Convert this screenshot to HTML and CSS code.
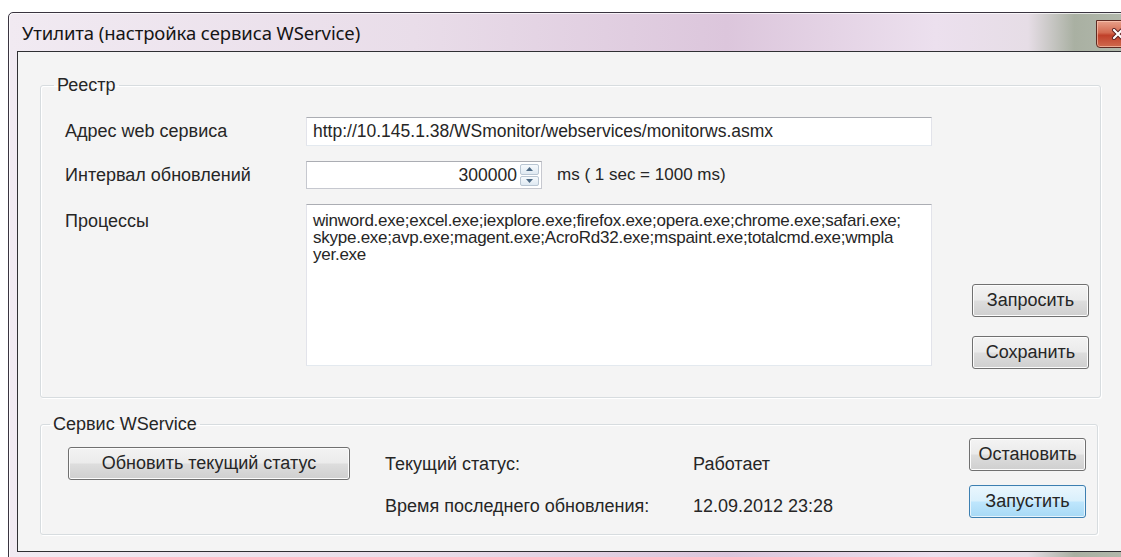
FILE: index.html
```html
<!DOCTYPE html>
<html lang="ru">
<head>
<meta charset="utf-8">
<title>Утилита (настройка сервиса WService)</title>
<link rel="stylesheet" href="styles.css">
</head>
<body>
<div class="window">
  <div class="titlebar">
    <span class="title">Утилита (настройка сервиса WService)</span>
    <span class="close" aria-label="Закрыть">
      <svg width="14" height="12" viewBox="0 0 14 12">
        <path d="M3 2 L11 10 M11 2 L3 10" stroke="#5a2020" stroke-width="4" stroke-linecap="round"/>
        <path d="M3 2 L11 10 M11 2 L3 10" stroke="#ffffff" stroke-width="2.2" stroke-linecap="round"/>
      </svg>
    </span>
  </div>

  <div class="client">
    <fieldset class="group registry">
      <legend>Реестр</legend>
      <div class="reg-grid">
        <label class="lbl">Адрес web сервиса</label>
        <div class="textbox url">http://10.145.1.38/WSmonitor/webservices/monitorws.asmx</div>

        <label class="lbl">Интервал обновлений</label>
        <div class="interval">
          <div class="numeric">
            <span class="num">300000</span>
            <span class="spin">
              <span class="spin-btn"><svg width="7" height="4" viewBox="0 0 7 4"><path d="M0 4 L3.5 0 L7 4 Z" fill="#4d6a85"/></svg></span>
              <span class="spin-btn"><svg width="7" height="4" viewBox="0 0 7 4"><path d="M0 0 L3.5 4 L7 0 Z" fill="#4d6a85"/></svg></span>
            </span>
          </div>
          <span class="hint">ms ( 1 sec = 1000 ms)</span>
        </div>

        <label class="lbl lbl-top">Процессы</label>
        <div class="textbox memo">winword.exe;excel.exe;iexplore.exe;firefox.exe;opera.exe;chrome.exe;safari.exe;<br>skype.exe;avp.exe;magent.exe;AcroRd32.exe;mspaint.exe;totalcmd.exe;wmpla<br>yer.exe</div>

        <div class="actions">
          <button class="btn side">Запросить</button>
          <button class="btn side">Сохранить</button>
        </div>
      </div>
    </fieldset>

    <fieldset class="group service">
      <legend>Сервис WService</legend>
      <div class="svc-row">
        <button class="btn refresh">Обновить текущий статус</button>
        <div class="status">
          <span>Текущий статус:</span>
          <span>Работает</span>
          <span>Время последнего обновления:</span>
          <span>12.09.2012 23:28</span>
        </div>
        <div class="svc-actions">
          <button class="btn side">Остановить</button>
          <button class="btn side default">Запустить</button>
        </div>
      </div>
    </fieldset>
  </div>
</div>
</body>
</html>
```

FILE: styles.css
```css
html, body {
  margin: 0;
  padding: 0;
  background: #ffffff;
  overflow: hidden;
  height: 557px;
}

body {
  font-family: "Liberation Sans", Arial, sans-serif;
  font-size: 18px;
  color: #262626;
}

/* window frame */
.window {
  margin: 12px 0 0 8px;
  width: 1150px;
  border: 1px solid #3a3440;
  border-radius: 5px 5px 0 0;
  background: linear-gradient(90deg, #f1eaf2 0%, #e9dde9 35%, #dcc6dc 62%, #ece0ee 80%, #e6dde6 88%, #a9b0a2 92%, #b9bfb4 100%);
  padding: 0 0 8px 8px;
  box-shadow: inset 1px 1px 0 rgba(255, 255, 255, 0.7);
}

.titlebar {
  height: 38px;
  display: flex;
  align-items: flex-start;
}

.title {
  font-family: "Noto Sans", "Open Sans", sans-serif;
  font-size: 18.5px;
  color: #151515;
  margin: 7px 0 0 5px;
  letter-spacing: -0.1px;
}

.close {
  margin: 7px 27px 0 auto;
  width: 42px;
  height: 26px;
  border: 1px solid #5e2a22;
  border-radius: 0 0 4px 4px;
  background: linear-gradient(#e8a18b 0%, #d36a50 45%, #c0402a 55%, #cf6a4e 100%);
  display: flex;
  align-items: center;
  justify-content: center;
  box-shadow: inset 0 0 0 1px rgba(255, 210, 190, 0.6);
}

/* client area */
.client {
  background: #f4f4f4;
  border: 1px solid #2f2f33;
  border-right: none;
  padding: 24px 0 16px 22px;
}

.group {
  margin: 0;
  width: 1058px;
  box-sizing: border-box;
  border: 1px solid #d7dcdf;
  border-radius: 3px;
  padding: 0;
  box-shadow: inset 1px 1px 0 #ffffff, 1px 1px 0 #ffffff;
}

.group legend {
  margin-left: 13px;
  padding: 0 3px;
  line-height: 18px;
  font-size: 18px;
}

.service legend {
  margin-left: 9px;
}

.service {
  margin-top: 17px;
}

/* registry block */
.reg-grid {
  display: grid;
  grid-template-columns: 241px 626px 40px 117px;
  grid-template-rows: 29px 28px 162px;
  row-gap: 15px;
  padding: 23px 11px 31px 24px;
}

.reg-grid .actions {
  grid-column: 4;
  grid-row: 1 / 4;
  display: flex;
  flex-direction: column;
  justify-content: flex-end;
  gap: 19px;
  margin-bottom: -3px;
}

.lbl {
  grid-column: 1;
  align-self: center;
}

.lbl-top {
  align-self: start;
  padding-top: 7px;
}

.textbox {
  background: #ffffff;
  border: 1px solid #e2e3ea;
  border-top-color: #abadb3;
  border-bottom-color: #e3e9ef;
  box-sizing: border-box;
}

.url {
  grid-column: 2;
  padding: 4px 6px;
  line-height: 19px;
  font-size: 17.5px;
}

.interval {
  grid-column: 2;
  display: flex;
  align-items: center;
}

.numeric {
  width: 236px;
  height: 28px;
  box-sizing: border-box;
  background: #ffffff;
  border: 1px solid #c6c8cf;
  border-top-color: #abadb3;
  display: flex;
  align-items: stretch;
}

.num {
  flex: 1;
  text-align: right;
  line-height: 26px;
  padding-right: 3px;
  font-size: 17.5px;
}

.spin {
  width: 19px;
  display: flex;
  flex-direction: column;
  gap: 1px;
  padding: 2px 2px 2px 0;
}

.spin-btn {
  flex: 1;
  border: 1px solid #b9c6d3;
  border-radius: 2px;
  background: linear-gradient(#f6fafd, #dfe9f2);
  display: flex;
  align-items: center;
  justify-content: center;
}

.hint {
  margin-left: 15px;
  font-size: 17px;
}

.memo {
  grid-column: 2;
  padding: 7px 6px;
  line-height: 17px;
  font-size: 17px;
  letter-spacing: -0.25px;
}

/* buttons */
.btn {
  font: inherit;
  color: #262626;
  border: 1px solid #707070;
  border-radius: 3px;
  background: linear-gradient(#f3f3f3 0%, #ebebeb 48%, #dddddd 52%, #cfcfcf 100%);
  box-shadow: inset 0 0 0 1px #fcfcfc;
  padding: 0;
  cursor: default;
}

.side {
  width: 117px;
  height: 33px;
  font-size: 18px;
}

.default {
  border-color: #3c7fb1;
  background: linear-gradient(#eaf6fd 0%, #d9f0fc 48%, #bee6fd 52%, #a7d9f5 100%);
  box-shadow: inset 0 0 0 1px #e6f4fc;
}

/* service block */
.svc-row {
  display: flex;
  align-items: flex-start;
  padding: 5px 11px 16px 27px;
}

.refresh {
  width: 282px;
  height: 33px;
  margin-top: 9px;
  font-size: 18px;
}

.status {
  margin-left: 35px;
  margin-top: 17px;
  display: grid;
  grid-template-columns: 308px auto;
  row-gap: 23px;
  line-height: 19px;
  font-size: 18px;
}

.svc-actions {
  margin-left: auto;
  display: flex;
  flex-direction: column;
  gap: 14px;
}
```
